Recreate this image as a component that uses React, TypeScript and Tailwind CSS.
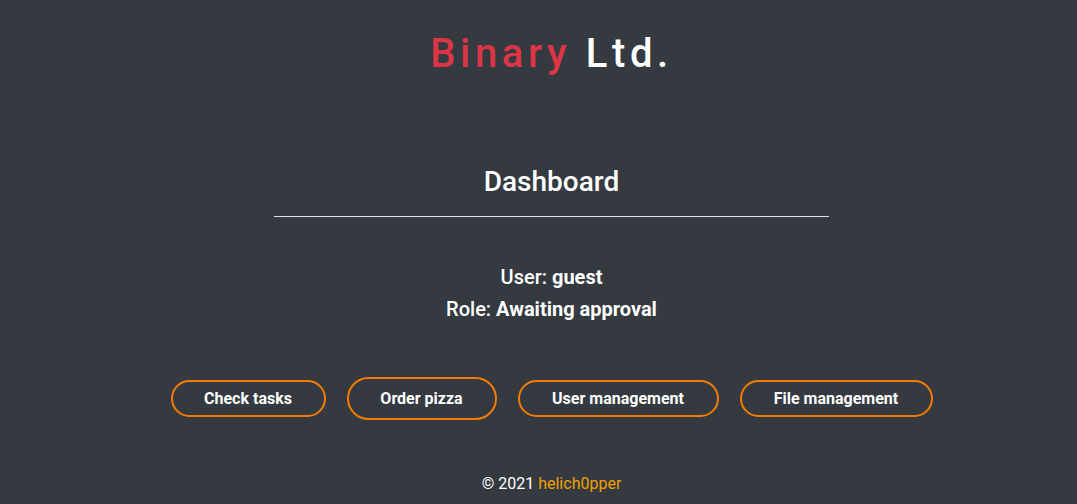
const actions = [
  { label: "Check tasks", className: "w-[155px] h-[37px]" },
  { label: "Order pizza", className: "w-[150px] h-[43px]" },
  { label: "User management", className: "w-[201px] h-[37px]" },
  { label: "File management", className: "w-[193px] h-[37px]" },
];

export default function App() {
  return (
    <div className="flex min-h-[504px] w-full flex-col items-center bg-[#343a40] pl-[26px] font-['Roboto',sans-serif] text-white">
      <h1 className="mt-[28px] text-[40px] font-medium leading-[52px] tracking-[0.115em]">
        <span className="text-[#dc3545]">Binary</span> Ltd.
      </h1>

      <div className="mt-[84px] flex w-[555px] flex-col items-center border-b border-[#dee2e6]">
        <h2 className="pb-[16px] text-[28px] font-medium leading-[36px]">Dashboard</h2>
      </div>

      <div className="mt-[44px] flex flex-col items-center text-[20px] font-medium leading-[32px]">
        <p>
          User: <span className="font-bold">guest</span>
        </p>
        <p>
          Role: <span className="font-bold">Awaiting approval</span>
        </p>
      </div>

      <div className="mt-[52px] flex items-center gap-[21px]">
        {actions.map((a) => (
          <button
            key={a.label}
            className={`${a.className} rounded-full border-2 border-[#f57c00] text-[16px] font-bold`}
          >
            {a.label}
          </button>
        ))}
      </div>

      <footer className="mt-[52px] text-[16px]">
        © 2021 <span className="text-[#f2a000]">helich0pper</span>
      </footer>
    </div>
  );
}
